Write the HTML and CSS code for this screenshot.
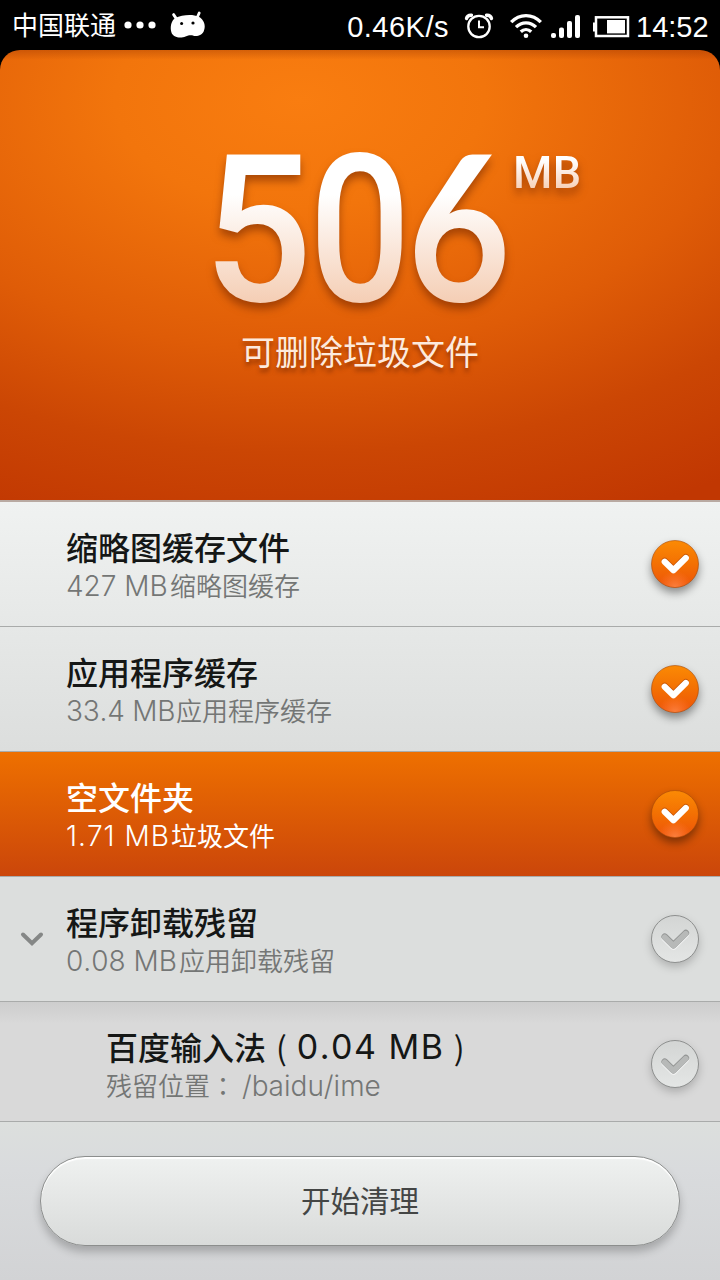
FILE: index.html
```html
<!DOCTYPE html>
<html lang="zh-CN">
<head>
<meta charset="utf-8">
<title>垃圾清理</title>
<link rel="stylesheet" href="styles.css">
</head>
<body>
<svg class="defs" width="0" height="0" aria-hidden="true">
  <defs>
    <linearGradient id="on" x1="0" y1="0" x2="0" y2="1"><stop offset="0" stop-color="#fb8a04"/><stop offset=".5" stop-color="#f37003"/><stop offset="1" stop-color="#ee5309"/></linearGradient>
    <radialGradient id="glow" cx=".5" cy="1" r=".36"><stop offset="0" stop-color="#fb8140"/><stop offset="1" stop-color="#ff7a30" stop-opacity="0"/></radialGradient>
    <linearGradient id="off" x1="0" y1="0" x2="0" y2="1"><stop offset="0" stop-color="#d3d5d4"/><stop offset="1" stop-color="#e4e6e5"/></linearGradient>
    <symbol id="check-on" viewBox="0 0 50 50">
      <circle cx="25" cy="25" r="23.5" fill="url(#on)"/>
      <circle cx="25" cy="25" r="23.5" fill="url(#glow)"/>
      <circle class="rim" cx="25" cy="25" r="23.500" fill="none"/>
      <path d="M14.700 21.700l8.700 8.500 12.400-12.200" fill="none" stroke="#a63c00" stroke-opacity=".6" stroke-width="6.200" stroke-linecap="round" stroke-linejoin="miter"/>
      <path d="M14.700 22.700l8.700 8.500 12.400-12.200" fill="none" stroke="#fff" stroke-width="6.200" stroke-linecap="round" stroke-linejoin="round"/>
    </symbol>
    <symbol id="check-off" viewBox="0 0 50 50">
      <circle cx="25" cy="25" r="23.500" fill="url(#off)" stroke="#8d8f8e"/>
      <path d="M14.700 24l8.700 8.500 12.400-12.200" fill="none" stroke="#f0f1f1" stroke-width="6.800" stroke-linecap="round" stroke-linejoin="round"/>
      <path d="M14.700 22.700l8.700 8.500 12.400-12.200" fill="none" stroke="#929493" stroke-width="6.600" stroke-linecap="round" stroke-linejoin="round"/>
      <path d="M14.700 23.300l8.700 8.500 12.400-12.200" fill="none" stroke="#b7b9b8" stroke-width="5.600" stroke-linecap="round" stroke-linejoin="round"/>
    </symbol>
  </defs>
</svg>
<div class="screen">
  <header class="status">
    <span class="carrier">中国联通</span>
    <svg class="dots" width="32" height="8" viewBox="0 0 32 8"><circle cx="4" cy="4" r="3.6"/><circle cx="16" cy="4" r="3.6"/><circle cx="28" cy="4" r="3.6"/></svg>
    <svg class="droid" width="36" height="28" viewBox="0 0 36 28">
      <path d="M3.600 3.600l3 4.500M29.200 2l-2.200 5" stroke="#fff" stroke-width="2.800" stroke-linecap="round"/>
      <path d="M5.200 7C12 3.500 23 3 28.500 5.500C34 8.500 36 14.500 34 19.500C32.500 24.500 27 25.500 23.500 24.700C20.500 24 18.500 24.500 15.500 25.500C11 27.500 3 27 1.300 21C0 16 1 10 5.200 7Z" fill="#fff"/>
      <circle cx="11.600" cy="12.600" r="1.500" fill="#000"/><circle cx="23" cy="12" r="1.600" fill="#000"/>
    </svg>
    <span class="speed">0.46K/s</span>
    <svg class="alarm" width="30" height="26" viewBox="0 0 30 26" fill="none" stroke="#fff">
      <circle cx="15" cy="13.500" r="10.700" stroke-width="2.300"/>
      <path d="M15 7.500v6.800h5" stroke-width="2"/>
      <path d="M2.500 5.500C3 3.500 5 2 7.500 2.200M27.500 5.500C27 3.500 25 2 22.500 2.200" stroke-width="3.400" stroke-linecap="round"/>
    </svg>
    <svg class="wifi" width="34" height="26" viewBox="0 0 34 26" fill="none" stroke="#fff" stroke-width="3.300">
      <path d="M2.200 9.200C10.500 .4 23.500 .4 31.800 9.200M7 14.200C12.700 8.400 21.300 8.400 27 14.200M11.800 18.800C14.800 15.900 19.200 15.900 22.200 18.800"/>
      <circle cx="17" cy="22.700" r="2.300" fill="#fff" stroke="none"/>
    </svg>
    <svg class="signal" width="30" height="24" viewBox="0 0 30 24" fill="#fff"><rect x="0" y="18" width="5" height="5" rx="2"/><rect x="8" y="12.500" width="5" height="10.500" rx="2"/><rect x="16" y="6" width="5" height="17" rx="2"/><rect x="24" y="0" width="5" height="23" rx="2"/></svg>
    <svg class="battery" width="38" height="22" viewBox="0 0 38 22"><rect x="4" y="1.300" width="32" height="18.700" fill="none" stroke="#fff" stroke-width="2.500"/><path d="M1 6.500h3v9H1z" fill="#fff"/><rect x="15" y="4" width="18" height="13.400" fill="#fff"/></svg>
    <span class="clock">14:52</span>
  </header>

  <section class="hero">
    <div class="total">
      <div class="number"><span class="digit five">5</span><span class="digit zero">0</span><span class="digit six">6</span></div>
      <span class="unit">MB</span>
    </div>
    <p class="caption">可删除垃圾文件</p>
  </section>

  <main class="list">
    <div class="row first">
      <div class="text"><h2>缩略图缓存文件</h2><p><span class="lat s1">427 MB</span><span class="han">缩略图缓存</span></p></div>
      <svg class="check" width="50" height="50"><use href="#check-on"/></svg>
    </div>
    <div class="row second">
      <div class="text"><h2>应用程序缓存</h2><p><span class="lat s2">33.4 MB</span><span class="han">应用程序缓存</span></p></div>
      <svg class="check" width="50" height="50"><use href="#check-on"/></svg>
    </div>
    <div class="row active">
      <div class="text"><h2>空文件夹</h2><p><span class="lat s3">1.71 MB</span><span class="han">垃圾文件</span></p></div>
      <svg class="check" width="50" height="50"><use href="#check-on"/></svg>
    </div>
    <div class="row group">
      <svg class="chevron" width="24" height="16" viewBox="0 0 24 16"><path d="M3 3.500l9 8.700 9-8.700" fill="none" stroke="#858786" stroke-width="4" stroke-linecap="round"/></svg>
      <div class="text"><h2>程序卸载残留</h2><p><span class="lat s4">0.08 MB</span><span class="han">应用卸载残留</span></p></div>
      <svg class="check" width="50" height="50"><use href="#check-off"/></svg>
    </div>
    <div class="row child">
      <div class="text"><h2>百度输入法<span class="size"><span class="paren">(</span><span class="lat big">0.04 MB</span><span class="paren">)</span></span></h2><p><span class="han place">残留位置<span class="colon" lang="zh-TW">：</span></span><span class="lat path">/baidu/ime</span></p></div>
      <svg class="check" width="50" height="50"><use href="#check-off"/></svg>
    </div>
  </main>

  <footer class="footer"><button class="clean">开始清理</button></footer>
</div>
</body>
</html>
```
FILE: styles.css
```css
* { box-sizing: border-box; }
body { margin: 0; background: #000; font-family: "Noto Sans CJK SC", sans-serif; }
.defs { position: absolute; }
.screen { width: 720px; height: 1280px; display: flex; flex-direction: column; overflow: hidden; background: #000; }

.status { height: 50px; flex: none; display: flex; align-items: center; padding: 0 12px 0 12px; color: #fff; white-space: nowrap; }
.carrier { font-size: 26px; line-height: 48px; height: 50px; font-weight: 400; width: 104px; }
.dots { margin-left: 8px; fill: #fff; }
.droid { margin-left: 14px; }
.speed { margin-left: auto; font: 29px/50px "Liberation Sans", sans-serif; letter-spacing: .5px; padding-top: 3px; }
.alarm { margin-left: 15px; margin-top: 2px; }
.wifi { margin-left: 15px; margin-top: 2px; }
.signal { margin-left: 8px; margin-top: 4px; }
.battery { margin-left: 11px; margin-top: 3px; }
.clock { margin-left: 6px; font: 29px/50px "Liberation Sans", sans-serif; padding-top: 3px; width: 72px; }

.hero {
  height: 450px; flex: none; border-radius: 20px 20px 0 0; padding-top: 92px;
  background:
    linear-gradient(rgba(150,50,0,.35), rgba(150,50,0,0) 10px),
    radial-gradient(ellipse 740px 430px at 300px 50px, #f97d10 0%, #f2750c 25%, #df5c07 58%, #cb4604 82%, #c13702 105%);
}
.total { display: flex; padding-left: 210px; height: 176px; filter: drop-shadow(0 6px 4px rgba(110,35,0,.55)); }
.number { width: 303px; display: flex; }
.digit {
  width: 140px; margin: 0 -20px; display: flex; flex: none; justify-content: center; font: 500 206px/178px Roboto, sans-serif;
  color: transparent;
  background: linear-gradient(#fff 15%, #fff 30%, #f4cbb0 95%); -webkit-background-clip: text; background-clip: text;
}
.five { transform: translateX(-2px) scaleX(.93); }
.zero { transform: scaleX(.87); }
.six { font: 700 203px/162px Lato, sans-serif; height: 176px; transform: translateX(-1px) scaleX(.875); }
.unit {
  align-self: flex-start; font: 500 45px/61px Roboto, sans-serif; letter-spacing: .3px; color: transparent;
  background: linear-gradient(#fff 30%, #f6cdb2 80%); -webkit-background-clip: text; background-clip: text;
}
.caption { margin: 8px 0 0; text-align: center; font-size: 34px; line-height: 50px; color: #fdeadd; text-shadow: 0 4px 4px rgba(110,35,0,.6); }

.list { flex: none; border-top: 2px solid #b9aaa2; }
.row { display: flex; height: 125px; border-bottom: 1px solid #a9abaa; padding: 25px 21px 0 66px; position: relative; }
.first { background: linear-gradient(#f0f2f1, #e6e8e7); }
.second { background: linear-gradient(#e6e8e7, #dcdedd); }
.active { background: linear-gradient(#ee7000, #cb460a); color: #fff; }
.group { background: #dcdedd; }
.child { height: 120px; padding-left: 106px; background: linear-gradient(#cdcdcd, #d9d9d9 22px); }
.text { flex: 1; white-space: nowrap; }
h2 { margin: 0; font-size: 32px; line-height: 38px; height: 39px; font-weight: 500; color: #151716; }
.text p { margin: 0; font-size: 26px; line-height: 38px; height: 38px; font-weight: 350; color: #747675; display: flex; }
.active h2, .active p { color: #fff; }
.active p { font-weight: 400; }
.lat { font-family: Inter, sans-serif; font-weight: 300; font-size: 28px; line-height: 40px; font-kerning: none; }
.s1 { width: 104px; }
.s2 { width: 110px; letter-spacing: -.2px; }
.s3 { width: 105px; letter-spacing: 1px; }
.s4 { width: 113px; }
.size { display: inline-flex; }
.paren { font-weight: 400; margin: 0 10px; }
.big { font-weight: 400; font-size: 34px; width: 147px; letter-spacing: 1.5px; }
.place { width: 136px; }
.colon { font-family: "Noto Sans CJK TC", sans-serif; }
.check { margin: 12px -1px 0 0; flex: none; overflow: visible; filter: drop-shadow(0 5px 4px rgba(0,0,0,.4)); }
.rim { stroke: #a84a08; stroke-opacity: .6; }
.active .rim { stroke-opacity: .25; }
.group .check, .child .check { filter: drop-shadow(0 4px 4px rgba(0,0,0,.2)); }
.chevron { position: absolute; left: 20px; top: 54px; }

.footer { flex: 1; padding: 34px 40px; background: linear-gradient(#dcdfdd, #d9dbdd 30%, #d2d3d5); }
.clean {
  display: block; width: 640px; height: 90px; border: 1px solid #8c8e8d; border-radius: 45px; color: #444645;
  font: 400 29.5px/84px "Noto Sans CJK SC", sans-serif; padding: 0 0 4px;
  background: linear-gradient(#eff1f0, #d9dbda); box-shadow: inset 0 2px 1px #fff, 0 6px 8px rgba(0,0,0,.22);
}
```
